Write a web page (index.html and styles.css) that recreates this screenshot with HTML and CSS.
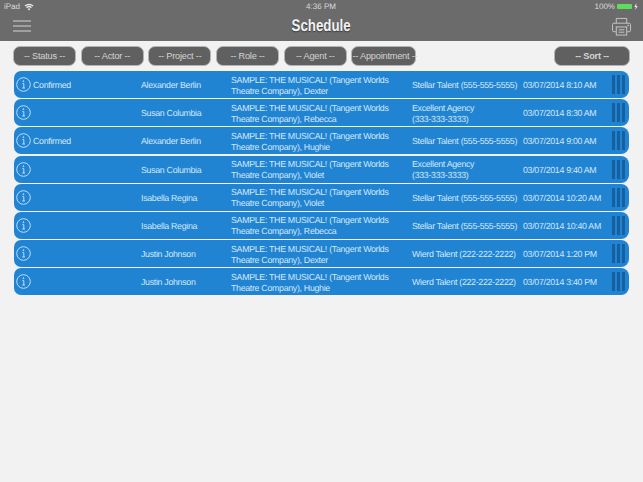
FILE: index.html
```html
<!DOCTYPE html>
<html lang="en">
  <head>
    <meta charset="UTF-8" />
    <meta name="viewport" content="width=device-width, initial-scale=1.0" />
    <title>Schedule</title>
    <link rel="stylesheet" href="styles.css">
  </head>
  <body>
    <header class="topbar">
      <div class="status-bar">
        <div class="status-left">
          <span>iPad</span>
          <svg class="wifi" width="10" height="8" viewBox="0 0 10 8">
            <path d="M0.5 2.6 A6.5 6.5 0 0 1 9.5 2.6 L8.6 3.6 A5.2 5.2 0 0 0 1.4 3.6 Z" fill="#e8e8e8" />
            <path d="M2.1 4.2 A4.2 4.2 0 0 1 7.9 4.2 L7 5.2 A2.9 2.9 0 0 0 3 5.2 Z" fill="#e8e8e8" />
            <path d="M3.7 5.9 A1.9 1.9 0 0 1 6.3 5.9 L5 7.4 Z" fill="#e8e8e8" />
          </svg>
        </div>
        <div class="status-time">4:36 PM</div>
        <div class="status-right">
          <span>100%</span>
          <span class="battery"></span>
          <svg class="charge" width="4" height="7" viewBox="0 0 4 7"><path d="M2.4 0 L0.4 3.9 H1.7 L1.4 7 L3.6 2.9 H2.2 Z" fill="#e8e8e8" /></svg>
        </div>
      </div>
      <div class="title-bar">
        <div class="menu-icon"><span></span><span></span><span></span></div>
        <h1>Schedule</h1>
        <svg class="print-icon" width="19" height="19" viewBox="0 0 20 20" fill="none" stroke="#c9c9c9" stroke-width="1">
          <path d="M4.5 6.5 V1.5 H15.5 V6.5" />
          <path d="M4 15.5 H2 Q0.5 15.5 0.5 14 V8 Q0.5 6.5 2 6.5 H18 Q19.5 6.5 19.5 8 V14 Q19.5 15.5 18 15.5 H16" />
          <rect x="4.5" y="10.5" width="11" height="8.5" />
          <path d="M7 13.5 H13 M7 16 H13" />
          <circle cx="17" cy="8.8" r="0.5" />
        </svg>
      </div>
    </header>

    <div class="filters">
      <button class="filter">-- Status --</button>
      <button class="filter">-- Actor --</button>
      <button class="filter">-- Project --</button>
      <button class="filter">-- Role --</button>
      <button class="filter">-- Agent --</button>
      <button class="filter appointment">-- Appointment --</button>
      <button class="filter sort">-- Sort --</button>
    </div>

    <div class="list" id="list"></div>

    <script>
      const rows = [
        ["Confirmed", "Alexander Berlin", "Dexter", "Stellar Talent", "555-555-5555", "03/07/2014 8:10 AM"],
        ["", "Susan Columbia", "Rebecca", "Excellent Agency", "333-333-3333", "03/07/2014 8:30 AM"],
        ["Confirmed", "Alexander Berlin", "Hughie", "Stellar Talent", "555-555-5555", "03/07/2014 9:00 AM"],
        ["", "Susan Columbia", "Violet", "Excellent Agency", "333-333-3333", "03/07/2014 9:40 AM"],
        ["", "Isabella Regina", "Violet", "Stellar Talent", "555-555-5555", "03/07/2014 10:20 AM"],
        ["", "Isabella Regina", "Rebecca", "Stellar Talent", "555-555-5555", "03/07/2014 10:40 AM"],
        ["", "Justin Johnson", "Dexter", "Wierd Talent", "222-222-2222", "03/07/2014 1:20 PM"],
        ["", "Justin Johnson", "Hughie", "Wierd Talent", "222-222-2222", "03/07/2014 3:40 PM"],
      ];
      const infoIcon = `<svg class="info" width="15" height="15" viewBox="0 0 15 15" fill="none" stroke="#cfe5f6" stroke-width="0.9">
        <circle cx="7.5" cy="7.5" r="6.8" />
        <path d="M6.4 6.6 H7.8 V11 M6.2 11 H9" />
        <circle cx="7.4" cy="4.2" r="0.5" />
      </svg>`;
      document.getElementById("list").innerHTML = rows
        .map(
          (r) => `<div class="row">
            ${infoIcon}
            <div class="cell status">${r[0]}</div>
            <div class="cell actor">${r[1]}</div>
            <div class="cell project">SAMPLE: THE MUSICAL! (Tangent Worlds Theatre Company), ${r[2]}</div>
            <div class="cell agent">${r[3]} <span class="phone">(${r[4]})</span></div>
            <div class="cell when">${r[5]}</div>
            <div class="handle"><span></span><span></span><span></span></div>
          </div>`
        )
        .join("");
    </script>
  </body>
</html>
```

FILE: styles.css
```css
body {
  margin: 0;
  height: 482px;
  overflow: hidden;
  background-color: #f2f2f2;
  font-family: "Liberation Sans", Arial, sans-serif;
  text-rendering: geometricPrecision;
  color: #d4e7f7;
}
.topbar {
  height: 41px;
  background-color: #6b6b6b;
}
.status-bar {
  display: flex;
  justify-content: space-between;
  align-items: center;
  height: 13px;
  padding: 0 5px 0 4px;
  font-size: 8px;
  color: #dcdcdc;
}
.status-left,
.status-right {
  display: flex;
  align-items: center;
  gap: 4px;
  width: 100px;
}
.status-right {
  justify-content: flex-end;
  gap: 2px;
}
.battery {
  width: 15px;
  height: 5px;
  background-color: #5ddc5d;
  border-radius: 1px;
}
.title-bar {
  display: flex;
  justify-content: space-between;
  align-items: center;
  height: 25px;
  padding: 0 12px 0 13px;
}
.menu-icon {
  display: grid;
  gap: 3px;
  width: 18px;
  margin-top: 1px;
}
.menu-icon span {
  display: block;
  height: 2px;
  background-color: #a0a0a0;
}
h1 {
  margin: 0;
  font-size: 16.7px;
  color: #f2f2f2;
  text-shadow: 0 1px 1px #333;
  transform: scaleX(0.795);
}
.print-icon {
  margin-top: 1px;
}
.filters {
  display: flex;
  gap: 4.7px;
  padding: 5px 13px 0;
}
.filter {
  width: 63px;
  height: 20px;
  padding: 0;
  font-family: inherit;
  font-size: 9.2px;
  letter-spacing: -0.2px;
  color: #d4d4d4;
  white-space: nowrap;
  background-color: #606060;
  border: 1px solid #b4b4b4;
  border-radius: 7px;
}
.filter.appointment {
  width: 65px;
}
.filter.sort {
  width: 76px;
  margin-left: auto;
  font-weight: bold;
}
.list {
  display: flex;
  flex-direction: column;
  gap: 1.2px;
  margin: 5px 14px 0;
}
.row {
  display: flex;
  align-items: center;
  height: 27px;
  padding-left: 2px;
  font-size: 8.8px;
  letter-spacing: -0.3px;
  line-height: 11px;
  background-color: #2184d3;
  border-radius: 7px 8px 8px 7px;
}
.info {
  flex: none;
  margin-right: 2px;
}
.cell {
  flex: none;
  padding-top: 2px;
}
.status {
  width: 108px;
}
.actor {
  width: 90px;
}
.project {
  width: 165px;
  margin-right: 16px;
}
.agent {
  width: 109px;
  margin-right: 2px;
}
.phone {
  white-space: nowrap;
}
.when {
  width: 89px;
}
.handle {
  display: flex;
  gap: 2.3px;
  height: 19px;
}
.handle span {
  width: 2.7px;
  background-color: #17609f;
}
```
